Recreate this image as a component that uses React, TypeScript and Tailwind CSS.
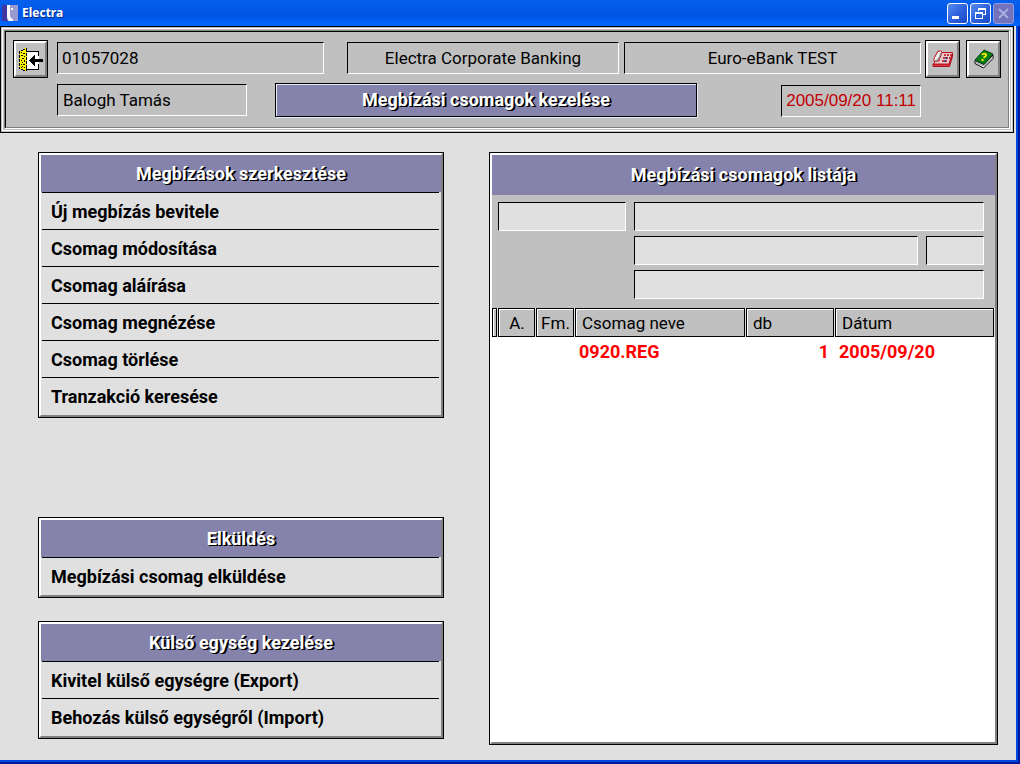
import type { ReactNode } from "react";

function TitleText({ children }: { children: ReactNode }) {
  return (
    <h2 className="text-[18px] leading-6 font-bold text-white [text-shadow:1px_1px_0_#000,2px_1px_0_#000]">
      {children}
    </h2>
  );
}

function Sunken({ className, children }: { className: string; children?: ReactNode }) {
  return (
    <div
      className={`min-w-0 overflow-hidden whitespace-nowrap border border-t-black border-l-black border-r-white border-b-white ${className}`}
    >
      {children}
    </div>
  );
}

function ToolButton({ label, children }: { label: string; children: ReactNode }) {
  return (
    <button
      type="button"
      aria-label={label}
      className="h-[38px] w-[35px] shrink-0 border border-black bg-[#c0c0c0]"
    >
      <span className="flex size-full items-center justify-center border-2 border-t-white border-l-white border-r-[#808080] border-b-[#808080]">
        {children}
      </span>
    </button>
  );
}

function MenuPanel({ title, items, className = "" }: { title: string; items: string[]; className?: string }) {
  return (
    <section className={`border border-black ${className}`}>
      <div className="border-2 border-t-white border-l-white border-r-[#808080] border-b-[#808080] pb-px">
        <div className="flex h-[37px] items-center justify-center bg-[#8583ab]">
          <TitleText>{title}</TitleText>
        </div>
        <ul className="mr-0.5 ml-px">
          {items.map((item) => (
            <li key={item} className="border-t border-black">
              <button
                type="button"
                className="block h-9 w-full pt-px pl-[9px] text-left text-[18px] leading-6 font-bold text-black"
              >
                {item}
              </button>
            </li>
          ))}
        </ul>
      </div>
    </section>
  );
}

function HeadCell({ children, className = "" }: { children?: ReactNode; className?: string }) {
  return (
    <th scope="col" className="bg-[#e0e0e0] p-0 pr-px font-normal">
      <div className="h-[29px] overflow-hidden border border-black bg-[#c0c0c0]">
        <div className={`h-full border-t border-l border-white text-[17px] leading-[27px] ${className}`}>{children}</div>
      </div>
    </th>
  );
}

function Field({ label, className }: { label: string; className: string }) {
  return (
    <input
      readOnly
      aria-label={label}
      className={`h-[29px] min-w-0 border border-t-black border-l-black border-r-white border-b-white bg-[#e0e0e0] px-1 outline-none ${className}`}
    />
  );
}

const captionButton =
  "flex size-[21px] items-center justify-center rounded-[3px] border border-white bg-linear-to-br from-[#5a8cf0] via-[#2f62df] to-[#1c48c4]";

export default function App() {
  return (
    <div className="flex min-h-screen flex-col bg-[#e0e0e0] font-['Roboto','Liberation_Sans',sans-serif] text-black">
      <header className="flex h-[26px] shrink-0 items-center justify-between bg-linear-to-b from-[#0560ee] via-[#0054e3] via-60% to-[#0568ff] pr-1.5 pl-0.5">
        <div className="flex items-center gap-1">
          <svg width="16" height="16" viewBox="0 0 16 16" aria-hidden="true">
            <rect width="16" height="16" fill="#9a9ad0" />
            <rect width="6" height="16" fill="#4038a0" />
            <path d="M5 0h3v10q0 3 3 4v2H7q-2-1-2-4z" fill="#f8f8ff" />
            <rect x="9" y="3" width="2" height="2" fill="#fff" />
          </svg>
          <h1 className="font-['Noto_Sans',sans-serif] text-[12px] leading-4 font-bold text-white [text-shadow:1px_1px_0_#0a2a8a]">
            Electra
          </h1>
        </div>
        <div className="flex gap-0.5">
          <button type="button" aria-label="Minimize" className={captionButton}>
            <svg width="15" height="15" viewBox="0 0 15 15">
              <rect x="2" y="10" width="7" height="3" fill="#fff" />
            </svg>
          </button>
          <button type="button" aria-label="Restore" className={captionButton}>
            <svg width="15" height="15" viewBox="0 0 15 15" fill="none" stroke="#fff" shapeRendering="crispEdges">
              <path d="M5.5 5V2.5h7v6H10M5 3.5h8" />
              <path d="M2.5 6.5h7v6h-7zM2 7.5h8" />
            </svg>
          </button>
          <button
            type="button"
            aria-label="Close"
            disabled
            className="flex size-[21px] items-center justify-center rounded-[3px] border border-[#8f9ce0] bg-[#7272bd]"
          >
            <svg width="15" height="15" viewBox="0 0 15 15" stroke="#a9b0e0" strokeWidth="2">
              <path d="M3 3l9 9M12 3l-9 9" />
            </svg>
          </button>
        </div>
      </header>

      <div className="flex flex-1 flex-col border-r-2 border-b-2 border-[#001a9c]">
        <div className="flex flex-1 flex-col border-r-2 border-b-2 border-[#0046e0]">
          <div className="mr-0.5 border border-black bg-[#c0c0c0] p-px">
            <div className="border border-white p-px">
              <div className="border border-t-[#808080] border-l-[#808080] border-r-white border-b-white">
                <div className="flex border border-t-black border-l-black border-r-[#808080] border-b-[#808080] pt-2 pr-[7px] pb-2.5 pl-[7px]">
                  <ToolButton label="Kilépés">
                    <svg width="25" height="25" viewBox="0 0 25 25" shapeRendering="crispEdges">
                      <path d="M8 4h13v19H8z" fill="#fff" />
                      <path d="M8 4.500h12.500V9M20.500 17v5.500H8" fill="none" stroke="#000" />
                      <path d="M1 4h2V3h3V1h3v23H6v-1H3v-1H1z" fill="#f8f000" />
                      <path
                        d="M1 4h1v3H1zM1 8h1v3H1zM1 12h1v3H1zM1 16h1v3H1zM1 20h1v2H1zM8 1h1v4H8zM8 6h1v3H8zM8 10h1v3H8zM8 14h1v3H8zM8 18h1v6H8zM3 3h2v1H3zM5 2h2v1H5zM3 22h2v1H3zM5 23h2v1H5zM3 5h1v1H3zM5 6h2v1H5zM3 8h2v1H3zM6 9h1v1H6zM4 11h2v1H4zM3 13h1v1H3zM6 13h1v2H6zM4 15h1v1H4zM3 17h1v1H3zM5 17h2v1H5zM4 19h1v1H4zM6 20h1v1H6zM3 20h1v1H3z"
                        fill="#000"
                      />
                      <path d="M11 13h1v-1h1v-1h1v-1h1V9h1V8h1v4h8v3h-8v4h-1v-1h-1v-1h-1v-1h-1v-1h-1v-1h-1z" fill="#000" />
                    </svg>
                  </ToolButton>

                  <div className="mr-1 ml-[9px] min-w-0 flex-1">
                    <div className="mt-0.5 flex text-[17px] leading-[30px]">
                      <Sunken className="flex-[267_1_267px] pl-1">01057028</Sunken>
                      <Sunken className="ml-[23px] flex-[272_1_272px] text-center">Electra Corporate Banking</Sunken>
                      <Sunken className="ml-[5px] flex-[297_1_297px] text-center">Euro-eBank TEST</Sunken>
                    </div>
                    <div className="mt-[9px] flex items-center text-[17px] leading-[30px]">
                      <Sunken className="flex-[190_1_190px] pl-[5px]">Balogh Tamás</Sunken>
                      <div className="ml-7 flex h-[34px] flex-[423_1_423px] items-center justify-center border border-black bg-[#8583ab] shadow-[inset_1px_1px_0_#e4ecf8,1px_1px_0_#e4ecf8]">
                        <TitleText>Megbízási csomagok kezelése</TitleText>
                      </div>
                      <Sunken className="mt-0.5 ml-[84px] flex-[140_1_140px] text-center font-['Liberation_Sans',sans-serif] text-[17px] text-[#c00000]">
                        2005/09/20 11:11
                      </Sunken>
                    </div>
                  </div>

                  <div className="flex gap-1.5">
                    <ToolButton label="Telefon">
                      <svg width="22" height="18" viewBox="0 0 22 18">
                        <path d="M8 2.500h12.500L17 14.500H1.500L3 11h4z" fill="#e8c8c8" stroke="#c00818" />
                        <path d="M1 14h16l3.500-10v2.500L17.500 16.500H1z" fill="#e03040" stroke="#a00010" strokeWidth="0.800" />
                        <path d="M6 1.200q3-1 4 1L8 8q-2 4-5.500 3.500Q1 10 2.500 7.500z" fill="#f4f4f4" stroke="#c00818" />
                        <path d="M9 3L7 8q-1 2.500-4 3" fill="none" stroke="#909090" strokeWidth="1.500" />
                        <path d="M12 5h7M11 8h7M10 11h6" stroke="#c00818" strokeDasharray="2 1" strokeWidth="1.500" />
                        <path d="M13 8h2M12 11h2" stroke="#203080" strokeWidth="1.500" />
                      </svg>
                    </ToolButton>
                    <ToolButton label="Súgó">
                      <svg width="20" height="20" viewBox="0 0 20 20">
                        <path d="M1 11.500l9 4 9-9.500v3.500L9.500 19 1 14.500z" fill="#fff" stroke="#000" />
                        <path d="M2 13.500l7.500 3.500 9-9" fill="none" stroke="#909090" />
                        <path d="M1 11L10 1l9 4-9 10.500z" fill="#08801a" stroke="#044010" />
                        <path d="M8 5.800q1.500-1.800 3.500-.8 1.500 1.500-.5 2.700l-1.500 1M7.500 11h2" fill="none" stroke="#ffee00" strokeWidth="1.800" />
                      </svg>
                    </ToolButton>
                  </div>
                </div>
              </div>
            </div>
          </div>

          <main className="flex flex-1 gap-[45px] pt-[19px] pr-[18px] pb-[15px] pl-[38px]">
            <div className="flex min-w-0 flex-[406_1_406px] flex-col pb-1.5">
              <MenuPanel
                title="Megbízások szerkesztése"
                items={[
                  "Új megbízás bevitele",
                  "Csomag módosítása",
                  "Csomag aláírása",
                  "Csomag megnézése",
                  "Csomag törlése",
                  "Tranzakció keresése",
                ]}
              />
              <MenuPanel className="mt-auto" title="Elküldés" items={["Megbízási csomag elküldése"]} />
              <MenuPanel
                className="mt-[23px]"
                title="Külső egység kezelése"
                items={["Kivitel külső egységre (Export)", "Behozás külső egységről (Import)"]}
              />
            </div>

            <section className="flex min-w-0 flex-[509_1_509px] border border-black bg-white">
              <div className="min-w-0 flex-1 border-2 border-t-white border-l-white border-r-[#808080] border-b-[#808080]">
                <div className="flex h-10 items-center justify-center bg-[#8583ab]">
                  <TitleText>Megbízási csomagok listája</TitleText>
                </div>
                <div className="flex items-start gap-2 bg-[#c0c0c0] pt-[7px] pr-[11px] pb-[9px] pl-1.5">
                  <Field label="Csomag azonosító" className="w-32 shrink-0" />
                  <div className="flex min-w-0 flex-1 flex-col gap-[5px]">
                    <Field label="Csomag neve" className="w-full" />
                    <div className="flex gap-2">
                      <Field label="Megbízás típusa" className="flex-1" />
                      <Field label="Darabszám" className="w-[58px]" />
                    </div>
                    <Field label="Megjegyzés" className="w-full" />
                  </div>
                </div>
                <table className="w-full table-fixed border-collapse">
                  <colgroup>
                    <col className="w-1.5" />
                    <col className="w-[38px]" />
                    <col className="w-[39px]" />
                    <col />
                    <col className="w-[89px]" />
                    <col className="w-40" />
                  </colgroup>
                  <thead>
                    <tr>
                      <HeadCell />
                      <HeadCell className="text-center">A.</HeadCell>
                      <HeadCell className="text-center">Fm.</HeadCell>
                      <HeadCell className="pl-[5px] text-left">Csomag neve</HeadCell>
                      <HeadCell className="pl-[5px] text-left">db</HeadCell>
                      <HeadCell className="pl-[5px] text-left">Dátum</HeadCell>
                    </tr>
                  </thead>
                  <tbody>
                    <tr className="text-[18px] leading-[30px] font-bold text-[#ff0000]">
                      <td />
                      <td />
                      <td />
                      <td className="p-0 pl-1">0920.REG</td>
                      <td className="p-0 pr-1.5 text-right">1</td>
                      <td className="p-0 pl-1">2005/09/20</td>
                    </tr>
                  </tbody>
                </table>
              </div>
            </section>
          </main>
        </div>
      </div>
    </div>
  );
}
